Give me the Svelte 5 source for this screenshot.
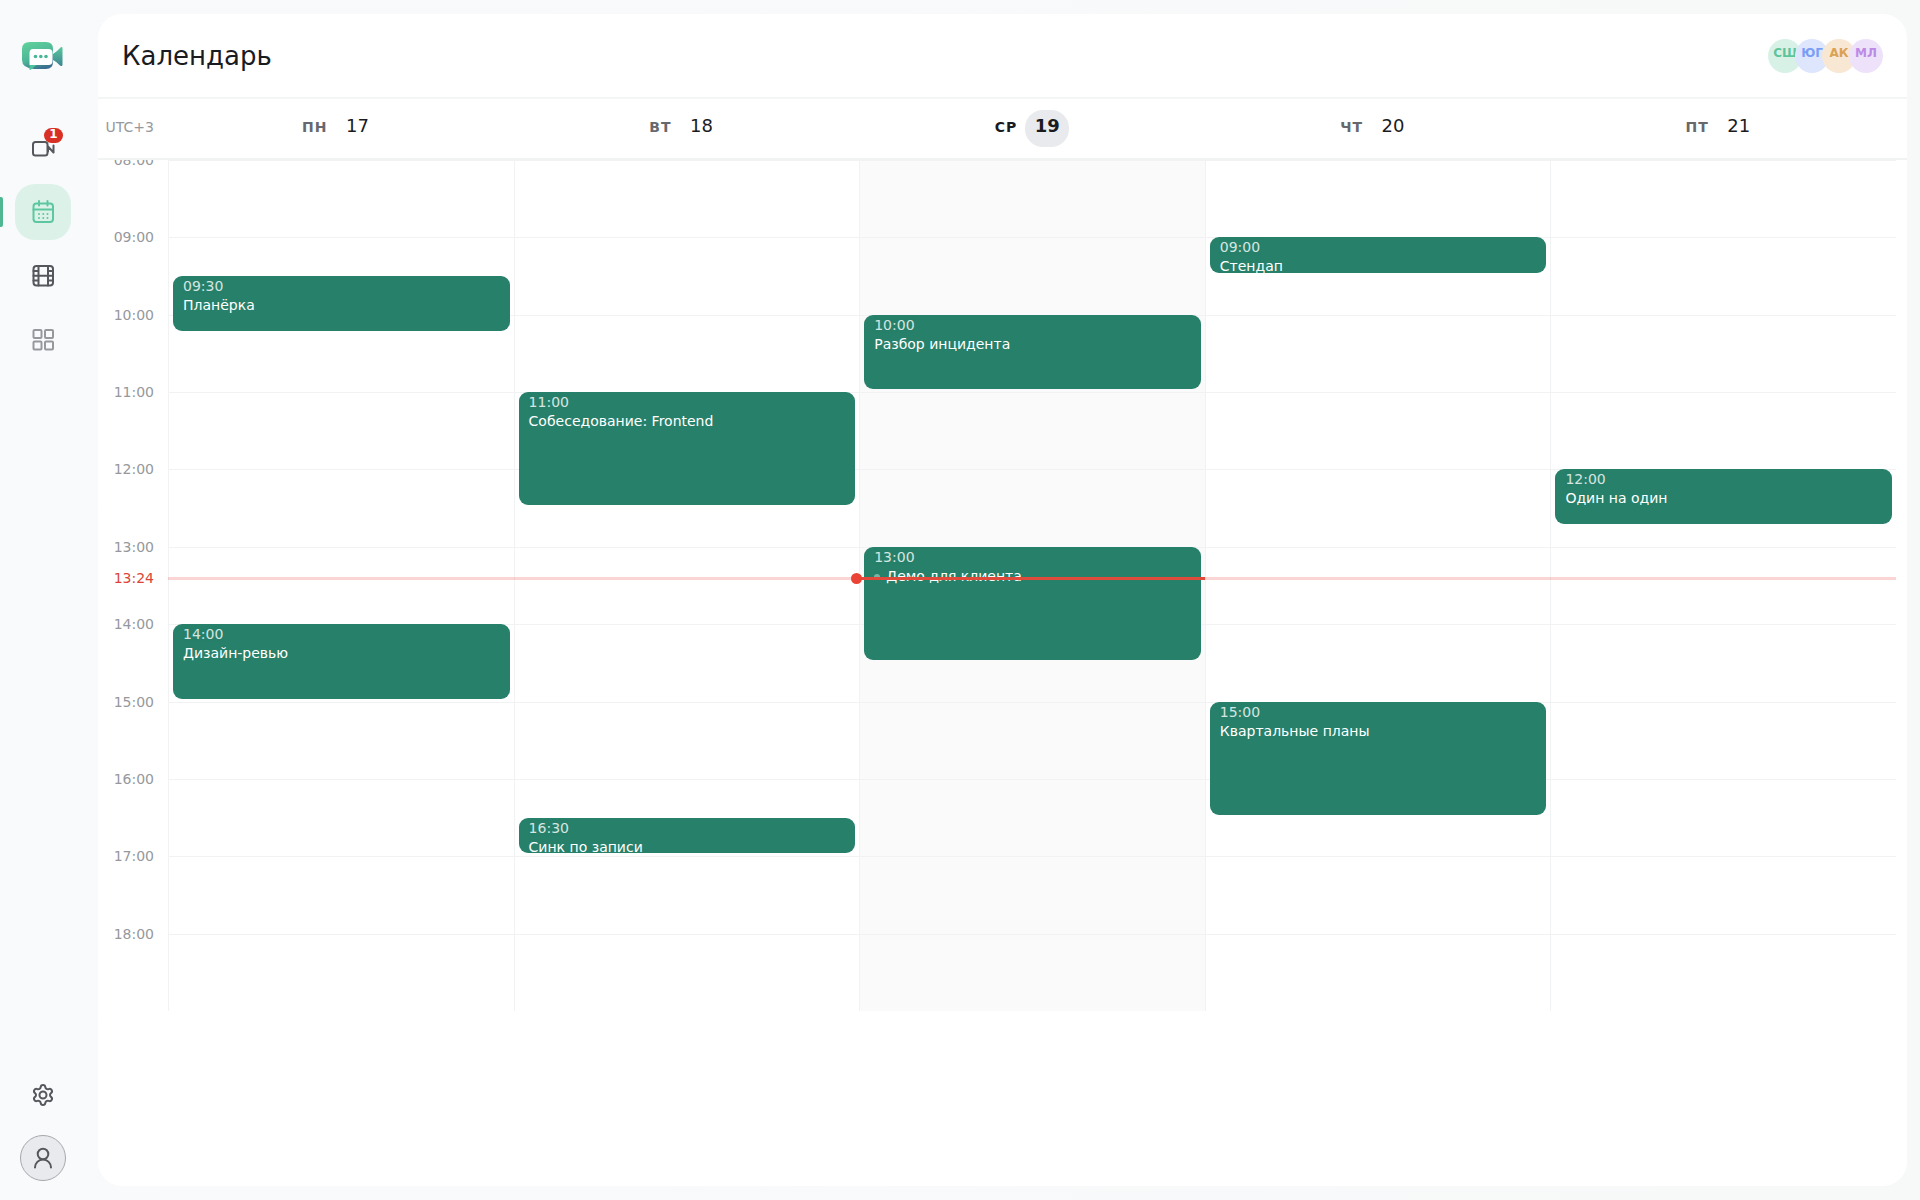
<script lang="ts">
	interface CalEvent {
		start: string;
		minutes: number;
		title: string;
		live?: boolean;
	}

	interface Day {
		label: string;
		date: number;
		today?: boolean;
		events: CalEvent[];
	}

	const FIRST_HOUR = 8;
	const LAST_HOUR = 19;
	const now = '13:24';

	const hours = Array.from({ length: LAST_HOUR - FIRST_HOUR }, (_, i) => FIRST_HOUR + i);

	const people = [
		{ initials: 'СШ', tone: 'green' },
		{ initials: 'ЮГ', tone: 'blue' },
		{ initials: 'АК', tone: 'orange' },
		{ initials: 'МЛ', tone: 'purple' }
	];

	const days: Day[] = [
		{
			label: 'ПН',
			date: 17,
			events: [
				{ start: '09:30', minutes: 45, title: 'Планёрка' },
				{ start: '14:00', minutes: 60, title: 'Дизайн-ревью' }
			]
		},
		{
			label: 'ВТ',
			date: 18,
			events: [
				{ start: '11:00', minutes: 90, title: 'Собеседование: Frontend' },
				{ start: '16:30', minutes: 30, title: 'Синк по записи' }
			]
		},
		{
			label: 'СР',
			date: 19,
			today: true,
			events: [
				{ start: '10:00', minutes: 60, title: 'Разбор инцидента' },
				{ start: '13:00', minutes: 90, title: 'Демо для клиента', live: true }
			]
		},
		{
			label: 'ЧТ',
			date: 20,
			events: [
				{ start: '09:00', minutes: 30, title: 'Стендап' },
				{ start: '15:00', minutes: 90, title: 'Квартальные планы' }
			]
		},
		{
			label: 'ПТ',
			date: 21,
			events: [{ start: '12:00', minutes: 45, title: 'Один на один' }]
		}
	];

	let active = $state('calendar');

	function share(minutes: number) {
		return (minutes / ((LAST_HOUR - FIRST_HOUR) * 60)) * 100;
	}

	function offset(time: string) {
		const [h, m] = time.split(':').map(Number);
		return share((h - FIRST_HOUR) * 60 + m);
	}
</script>

<div class="shell">
	<aside class="sidebar">
		<a class="logo" href="#home" aria-label="Главная">
			<svg width="42" height="30" viewBox="0 0 42 30">
				<defs>
					<linearGradient id="logo-body" x1="0.2" y1="0" x2="0.6" y2="1">
						<stop offset="0" stop-color="#5fd09c" />
						<stop offset="0.6" stop-color="#4db597" />
						<stop offset="1" stop-color="#3b6f90" />
					</linearGradient>
					<linearGradient id="logo-lens" x1="0" y1="0" x2="0" y2="1">
						<stop offset="0" stop-color="#58c79b" />
						<stop offset="1" stop-color="#3f8592" />
					</linearGradient>
				</defs>
				<path d="M8 1h16q7 0 7 7v13q0 7-7 7H12q-12-1-12-9V8q0-7 8-7z" fill="url(#logo-body)" />
				<path d="M31 13q4-2.500 7-6 2.500-2 2.500.5v16q0 2.500-2.500 1Q35 21 31 19z" fill="url(#logo-lens)" />
				<path d="M11 8h15.500q4 0 4 4v8q0 4-4 4H7.500V12q0-4 3.500-4z" fill="#fff" />
				<path d="M7.500 24h7L9 28.600q-1.500 1-1.500-.6z" fill="#4cc39a" />
				<g fill="#48b795">
					<circle cx="13.500" cy="15.500" r="1.800" />
					<circle cx="18.800" cy="15.500" r="1.800" />
					<circle cx="24" cy="15.500" r="1.800" />
				</g>
			</svg>
		</a>

		<nav class="nav">
			<button class="nav-item" class:active={active === 'calls'} aria-label="Встречи" onclick={() => (active = 'calls')}>
				<svg class="icon" viewBox="0 0 24 24">
					<rect x="2" y="6" width="14.500" height="13.500" rx="2.500" />
					<path d="M17 15.500V10.500l5.500 6V9.500" />
				</svg>
				<span class="badge">1</span>
			</button>
			<button class="nav-item" class:active={active === 'calendar'} aria-label="Календарь" onclick={() => (active = 'calendar')}>
				<svg class="icon" viewBox="0 0 24 24">
					<rect x="2.500" y="3.500" width="19.500" height="18.500" rx="3" />
					<path d="M2.500 9.500h19.500M8 1v4.500M16.500 1v4.500" />
					<path d="M8 14v0M12.300 14v0M16.500 14v0M8 18v0M12.300 18v0M16.500 18v0" />
				</svg>
			</button>
			<button class="nav-item" class:active={active === 'records'} aria-label="Записи" onclick={() => (active = 'records')}>
				<svg class="icon" viewBox="0 0 24 24">
					<rect x="2.500" y="2" width="19.500" height="19.500" rx="3" />
					<path d="M7.500 2v19.500M17 2v19.500M7.500 11.800h9.500M2.500 7h5M2.500 11.800h5M2.500 16.600h5M17 7h5M17 11.800h5M17 16.600h5" />
				</svg>
			</button>
			<button class="nav-item muted" class:active={active === 'apps'} aria-label="Приложения" onclick={() => (active = 'apps')}>
				<svg class="icon" viewBox="0 0 24 24">
					<rect x="2.500" y="2" width="8" height="8" rx="1" />
					<rect x="14" y="2" width="8" height="8" rx="1" />
					<rect x="2.500" y="13.500" width="8" height="8" rx="1" />
					<rect x="14" y="13.500" width="8" height="8" rx="1" />
				</svg>
			</button>
		</nav>

		<button class="nav-item" aria-label="Настройки">
			<svg class="icon" viewBox="0 0 24 24">
				<path
					d="M9.671 4.136a2.340 2.340 0 0 1 4.659 0 2.340 2.340 0 0 0 3.319 1.915 2.340 2.340 0 0 1 2.330 4.033 2.340 2.340 0 0 0 0 3.831 2.340 2.340 0 0 1-2.330 4.033 2.340 2.340 0 0 0-3.319 1.915 2.340 2.340 0 0 1-4.659 0 2.340 2.340 0 0 0-3.320-1.915 2.340 2.340 0 0 1-2.330-4.033 2.340 2.340 0 0 0 0-3.831A2.340 2.340 0 0 1 6.350 6.051a2.340 2.340 0 0 0 3.319-1.915"
				/>
				<circle cx="12" cy="12" r="3.500" />
			</svg>
		</button>
		<button class="profile" aria-label="Профиль">
			<svg class="icon" viewBox="0 0 24 24">
				<circle cx="12" cy="8" r="5.300" />
				<path d="M4 21.500a8 8 0 0 1 16 0" />
			</svg>
		</button>
	</aside>

	<main class="panel">
		<header class="top">
			<h1>Календарь</h1>
			<div class="people">
				{#each people as person}
					<span class="person {person.tone}">{person.initials}</span>
				{/each}
			</div>
		</header>

		<div class="days">
			<span class="zone">UTC+3</span>
			{#each days as day}
				<div class="day" class:today={day.today}>
					<span class="day-label">{day.label}</span>
					<span class="day-date">{day.date}</span>
				</div>
			{/each}
		</div>

		<div class="scroller">
			<div class="week">
				<div class="hours">
					{#each hours as hour}
						<span class="hour">{String(hour).padStart(2, '0')}:00</span>
					{/each}
					<span class="hour now-label" style="top: {offset(now)}%">{now}</span>
				</div>
				<div class="columns">
					{#each days as day}
						<div class="column" class:today={day.today}>
							{#each hours as hour (hour)}
								<div class="slot"></div>
							{/each}
							{#each day.events as event}
								<button class="event" style="top: {offset(event.start)}%; height: calc({share(event.minutes)}% - 3px)">
									<span class="event-time">{event.start}</span>
									<span class="event-title">
										{#if event.live}<i class="live"></i>{/if}{event.title}
									</span>
								</button>
							{/each}
							{#if day.today}
								<div class="now-line strong" style="top: {offset(now)}%"></div>
							{/if}
						</div>
					{/each}
					<div class="now-line" style="top: {offset(now)}%"></div>
				</div>
			</div>
		</div>
	</main>
</div>

<style>
	:global(body) {
		margin: 0;
		background: #f8fafc;
	}

	.shell {
		display: flex;
		box-sizing: border-box;
		min-height: 100vh;
		padding: 14px 13px 14px 0;
		background: linear-gradient(90deg, #f9fafc, #f7f9f9);
		font-family: 'DejaVu Sans', Verdana, sans-serif;
		color: #1a1b1e;
	}

	button {
		font: inherit;
		border: none;
		padding: 0;
		cursor: pointer;
	}

	.sidebar {
		display: flex;
		flex-direction: column;
		align-items: center;
		width: 86px;
		margin-right: 12px;
		padding: 27px 0 5px;
		box-sizing: border-box;
		flex-shrink: 0;
	}

	.logo svg {
		display: block;
	}

	.nav {
		display: flex;
		flex-direction: column;
		gap: 8px;
		margin: 49px 0 auto;
	}

	.nav-item {
		position: relative;
		display: grid;
		place-items: center;
		width: 56px;
		height: 56px;
		border-radius: 20px;
		background: none;
		color: #55575c;
	}

	.nav-item.muted {
		color: #96989c;
	}

	.nav-item.active {
		background: #dcf2e9;
		color: #5cc7a0;
	}

	.nav-item.active::before {
		content: '';
		position: absolute;
		left: -15px;
		top: 13px;
		width: 3px;
		height: 30px;
		border-radius: 0 2px 2px 0;
		background: #4fb893;
	}

	.icon {
		width: 24px;
		height: 24px;
		fill: none;
		stroke: currentColor;
		stroke-width: 2;
		stroke-linecap: round;
		stroke-linejoin: round;
	}

	.badge {
		position: absolute;
		top: 8px;
		right: 8px;
		width: 19px;
		height: 15px;
		border-radius: 8px;
		background: #d93025;
		color: #fff;
		font-size: 12px;
		font-weight: 700;
		line-height: 12px;
		text-align: center;
	}

	.profile {
		display: grid;
		place-items: center;
		width: 46px;
		height: 46px;
		margin-top: 12px;
		border: 1px solid #a6a8ac;
		border-radius: 50%;
		background: #e9eaed;
		color: #55575c;
	}

	.panel {
		display: flex;
		flex-direction: column;
		flex: 1;
		min-width: 0;
		overflow: hidden;
		border-radius: 24px;
		background: #fff;
	}

	.top {
		display: flex;
		align-items: center;
		justify-content: space-between;
		height: 83px;
		padding: 0 24px;
		border-bottom: 2px solid #f4f5f5;
	}

	h1 {
		margin: 0;
		font-size: 26px;
		font-weight: 400;
	}

	.people {
		display: flex;
	}

	.person {
		width: 34px;
		height: 34px;
		border-radius: 50%;
		font-size: 12px;
		font-weight: 700;
		line-height: 29px;
		text-align: center;
	}

	.person + .person {
		margin-left: -7px;
	}

	.green {
		background: #d8f1e6;
		color: #5ec49c;
	}

	.blue {
		background: #dde6fd;
		color: #7a9df5;
	}

	.orange {
		background: #f8e7d3;
		color: #dba154;
	}

	.purple {
		background: #eee2fa;
		color: #bd8ae6;
	}

	.days {
		display: flex;
		align-items: center;
		height: 59px;
		padding-right: 11px;
		border-bottom: 2px solid #f1f2f2;
	}

	.zone {
		width: 56px;
		padding: 0 14px 3px 0;
		font-size: 14px;
		text-align: right;
		color: #96989c;
	}

	.day {
		display: flex;
		flex: 1;
		align-items: baseline;
		justify-content: center;
		gap: 8px;
	}

	.day-label {
		font-size: 14px;
		font-weight: 700;
		letter-spacing: 1px;
		color: #66686d;
	}

	.day-date {
		width: 44px;
		height: 37px;
		border-radius: 18px;
		font-size: 18px;
		line-height: 32px;
		text-align: center;
	}

	.day.today .day-label {
		color: #1a1b1e;
	}

	.day.today .day-date {
		background: #e9eaed;
		font-weight: 700;
	}

	.scroller {
		flex: 1;
		padding-right: 11px;
		overflow: hidden;
	}

	.week {
		display: flex;
		height: 851px;
	}

	.hours {
		position: relative;
		display: grid;
		grid-auto-rows: 1fr;
		width: 70px;
	}

	.hour {
		height: 16px;
		margin-top: -8px;
		padding-right: 14px;
		font-size: 14px;
		line-height: 17px;
		text-align: right;
		color: #96989c;
	}

	.now-label {
		position: absolute;
		right: 0;
		color: #dc4437;
	}

	.columns {
		position: relative;
		display: flex;
		flex: 1;
	}

	.column {
		position: relative;
		display: grid;
		grid-auto-rows: 1fr;
		flex: 1;
		border-left: 1px solid #f1f2f3;
	}

	.column.today {
		background: #fafafa;
	}

	.slot {
		border-top: 1px solid #f1f2f3;
	}

	.event {
		position: absolute;
		left: 4px;
		right: 4px;
		display: flex;
		flex-direction: column;
		padding: 1px 10px 0;
		overflow: hidden;
		border-radius: 9px;
		background: #27806a;
		color: #fff;
		font-size: 14px;
		line-height: 19px;
		text-align: left;
	}

	.event-time {
		opacity: 0.8;
	}

	.event-title {
		white-space: nowrap;
	}

	.live {
		display: inline-block;
		width: 6px;
		height: 6px;
		margin-right: 6px;
		border-radius: 50%;
		background: #7db3a5;
		vertical-align: middle;
	}

	.now-line {
		position: absolute;
		left: 0;
		right: 0;
		height: 3px;
		margin-top: -1px;
		background: rgba(228, 67, 53, 0.22);
		pointer-events: none;
	}

	.now-line.strong {
		z-index: 1;
		background: #e04a3b;
	}

	.now-line.strong::before {
		content: '';
		position: absolute;
		left: -9px;
		top: -4px;
		width: 11px;
		height: 11px;
		border-radius: 50%;
		background: #ea4335;
	}
</style>
